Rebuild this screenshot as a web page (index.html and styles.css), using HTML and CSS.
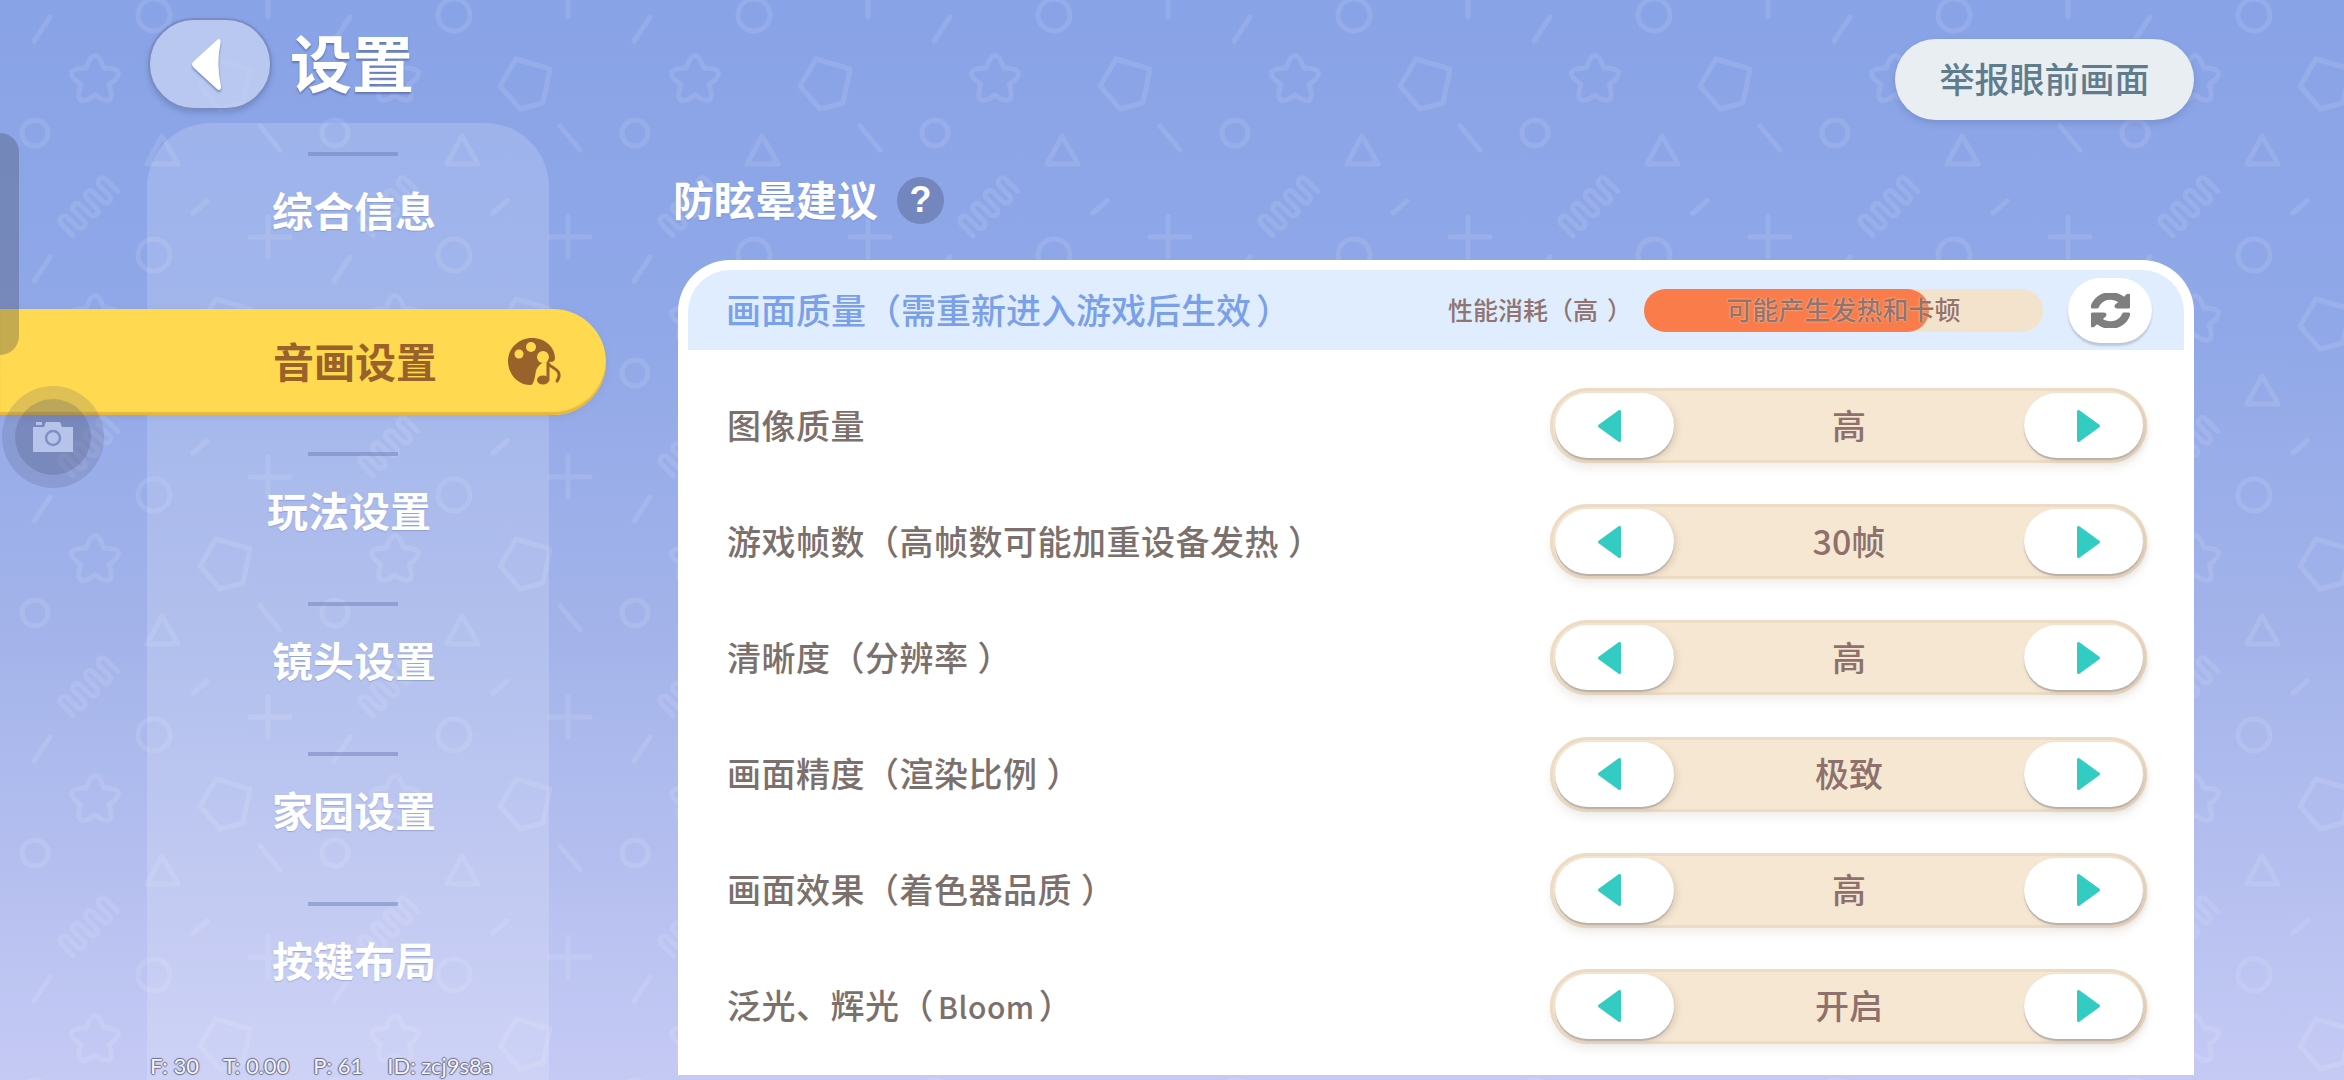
FILE: index.html
```html
<!DOCTYPE html>
<html lang="zh-CN">
<head>
<meta charset="utf-8">
<title>设置</title>
<link rel="stylesheet" href="styles.css">
</head>
<body>
<svg class="defs" aria-hidden="true">
  <symbol id="tri" viewBox="0 0 25 34"><path d="M22.5 2.5V31.5L2.5 17Z"/></symbol>
</svg>
<div class="page">
  <aside class="side">
    <div class="top">
      <button class="back" aria-label="返回">
        <svg class="back-arrow" viewBox="0 0 32 55"><path d="M26 3C28 1 30 2 29.5 6Q25 28 30 49C30.5 53 28 54 26 52L3 31Q-1 27 3 24Z"/></svg>
      </button>
      <h1 class="title">设置</h1>
    </div>
    <nav class="panel">
      <i class="sep"></i><a class="item">综合信息</a>
      <a class="active"><span>音画设置</span>
        <svg class="palette" viewBox="0 0 54 48">
          <path class="brown" d="M24 0C38 0 47 10 47 20C47 23 45 24 42 24C35 23 30 27 28 33C27 37 27 41 25 45C24 47 23 47 22 47C10 47 0 36 0 23C0 10 11 0 24 0Z"/>
          <circle class="hole" cx="11" cy="16" r="4.500"/><circle class="hole" cx="23" cy="9" r="5"/><circle class="hole" cx="35" cy="19" r="6"/>
          <ellipse class="brown" cx="35" cy="42" rx="6" ry="4.500"/>
          <path class="note" d="M40 42V25C42 30 50 30 51 36C51.500 39 50.500 41 49 43"/>
        </svg>
      </a>
      <i class="sep"></i><a class="item item-shift">玩法设置</a>
      <i class="sep"></i><a class="item">镜头设置</a>
      <i class="sep"></i><a class="item">家园设置</a>
      <i class="sep"></i><a class="item">按键布局</a>
      <div class="debug"><span>F: 30</span><span>T: 0.00</span><span>P: 61</span><span>ID: zcj9s8a</span></div>
    </nav>
  </aside>

  <main class="main">
    <button class="report">举报眼前画面</button>
    <div class="heading"><h2 class="heading-text">防眩晕建议</h2><span class="help">?</span></div>
    <section class="card">
      <header class="card-head">
        <h3 class="card-title">画面质量（需重新进入游戏后生效<span class="rp rp-title">）</span></h3>
        <span class="cost">性能消耗（高<span class="rp">）</span></span>
        <div class="bar"><div class="bar-fill" style="width:71.500%"></div><span class="bar-text">可能产生发热和卡顿</span></div>
        <button class="refresh" aria-label="重置">
          <svg class="refresh-icon" viewBox="0 0 1536 1536" preserveAspectRatio="none"><path d="M1511 928q0 5-1 7-64 268-268 434.5t-478 166.5q-146 0-282.5-55t-243.5-157l-129 129q-19 19-45 19t-45-19-19-45v-448q0-26 19-45t45-19h448q26 0 45 19t19 45-19 45l-137 137q71 66 161 102t187 36q134 0 250-65t186-179q11-17 53-117 8-23 30-23h192q13 0 22.5 9.5t9.5 22.5zm25-800v448q0 26-19 45t-45 19h-448q-26 0-45-19t-19-45 19-45l138-138q-148-137-349-137-134 0-250 65t-186 179q-11 17-53 117-8 23-30 23h-199q-13 0-22.5-9.5t-9.500-22.5v-7q65-268 270-434.5t480-166.5q146 0 284 55.5t245 156.5l130-129q19-19 45-19t45 19 19 45z"/></svg>
        </button>
      </header>
      <div class="rows">
        <div class="row"><span class="label">图像质量</span><div class="stepper"><button class="step"><svg class="tri tri-left"><use href="#tri"/></svg></button><span class="value">高</span><button class="step"><svg class="tri tri-right"><use href="#tri"/></svg></button></div></div>
        <div class="row"><span class="label">游戏帧数（高帧数可能加重设备发热<span class="rp">）</span></span><div class="stepper"><button class="step"><svg class="tri tri-left"><use href="#tri"/></svg></button><span class="value">30帧</span><button class="step"><svg class="tri tri-right"><use href="#tri"/></svg></button></div></div>
        <div class="row"><span class="label">清晰度（分辨率<span class="rp">）</span></span><div class="stepper"><button class="step"><svg class="tri tri-left"><use href="#tri"/></svg></button><span class="value">高</span><button class="step"><svg class="tri tri-right"><use href="#tri"/></svg></button></div></div>
        <div class="row"><span class="label">画面精度（渲染比例<span class="rp">）</span></span><div class="stepper"><button class="step"><svg class="tri tri-left"><use href="#tri"/></svg></button><span class="value">极致</span><button class="step"><svg class="tri tri-right"><use href="#tri"/></svg></button></div></div>
        <div class="row"><span class="label">画面效果（着色器品质<span class="rp">）</span></span><div class="stepper"><button class="step"><svg class="tri tri-left"><use href="#tri"/></svg></button><span class="value">高</span><button class="step"><svg class="tri tri-right"><use href="#tri"/></svg></button></div></div>
        <div class="row"><span class="label">泛光、辉光（<span class="latin">Bloom</span>）</span><div class="stepper"><button class="step"><svg class="tri tri-left"><use href="#tri"/></svg></button><span class="value">开启</span><button class="step"><svg class="tri tri-right"><use href="#tri"/></svg></button></div></div>
      </div>
    </section>
  </main>

  <div class="handle"></div>
  <div class="shot">
    <div class="shot-inner">
      <svg class="camera" viewBox="0 0 40 30">
        <path class="camera-body" d="M0 5H11L13 0H27L29 5H40V30H0Z"/>
        <rect class="camera-body" x="3" y="0" width="6" height="3"/>
        <circle class="camera-lens" cx="20" cy="16" r="7"/>
      </svg>
    </div>
  </div>
</div>
</body>
</html>
```
FILE: styles.css
```css
* { box-sizing: border-box; }
html, body { margin: 0; padding: 0; }
body { width: 2344px; height: 1080px; overflow: hidden; font-family: "Noto Sans CJK SC", "Noto Sans", sans-serif; text-spacing-trim: space-all; }
.defs { display: none; }
button { border: 0; padding: 0; font: inherit; cursor: pointer; }
h1, h2, h3 { margin: 0; font-weight: 500; }

.page {
  position: relative;
  display: flex;
  width: 2344px;
  height: 1080px;
  overflow: hidden;
  background-color: #86a1e5;
  background-image:
    url("data:image/svg+xml,%3Csvg xmlns='http://www.w3.org/2000/svg' width='300' height='240' fill='none' stroke='%23fff' stroke-opacity='.1' stroke-width='5' stroke-linecap='round' stroke-linejoin='round'%3E%3Cpath d='M86.200 67.900Q95 43 103.800 67.900Q130.200 68.600 109.300 84.600Q116.700 109.900 95 95Q73.300 109.900 80.700 84.600Q59.800 68.600 86.200 67.900Z'/%3E%3Cpath d='M216 59L250 69L243 103L220 109L200 86Z'/%3E%3Ccircle cx='35' cy='133' r='13'/%3E%3Ccircle cx='154' cy='15' r='16'/%3E%3Ccircle cx='154' cy='255' r='16'/%3E%3Cpath d='M162 136L178 164H147Z'/%3E%3Cpath d='M260 126L280 150M50 17L34 41M193 213L207 201M250 237H290M268 217V257M250 -3H290M268 -23V17'/%3E%3Cpath transform='translate(87 205) rotate(-45)' d='M-31.500 12v-17a4.500 4.500 0 0 1 9 0v14a4.500 4.500 0 0 0 9 0v-14a4.500 4.500 0 0 1 9 0v14a4.500 4.500 0 0 0 9 0v-14a4.500 4.500 0 0 1 9 0v14a4.500 4.500 0 0 0 9 0v-14a4.500 4.500 0 0 1 9 0v17'/%3E%3C/svg%3E"),
    linear-gradient(#88a3e6 0%, #90a8e8 30%, #a4b4ea 60%, #c5caf4 100%);
  background-size: 300px 240px, 100% 100%;
}

/* Sidebar */
.side { display: flex; flex-direction: column; width: 678px; flex: none; }
.top { display: flex; align-items: center; gap: 18px; margin: 18px 0 0 148px; height: 92px; }
.back {
  display: flex; align-items: center; justify-content: center;
  width: 124px; height: 92px; border-radius: 46px;
  background: rgba(200, 212, 243, .75);
  border: 2px solid #7a8cc0;
  box-shadow: 0 3px 5px rgba(70, 85, 140, .3);
}
.back-arrow { width: 32px; height: 55px; margin-right: 6px; fill: #fff; filter: drop-shadow(0 2px 1px rgba(70, 85, 140, .55)); }
.title { font-size: 62px; font-weight: 700; line-height: 86px; padding-bottom: 6px; color: #fff; text-shadow: 0 2px 2px rgba(70, 85, 140, .55); }

.panel {
  display: flex; flex-direction: column; flex: 1;
  width: 402px; margin: 13px 0 0 147px; padding-top: 29px;
  border-radius: 64px 64px 0 0;
  background: rgba(255, 255, 255, .16);
}
.sep { display: block; flex: none; width: 90px; height: 4px; margin-left: 161px; background: rgba(110, 125, 185, .5); }
.item {
  display: block; flex: none; height: 146px; padding-left: 12px;
  font-size: 41px; font-weight: 700; line-height: 107px; text-align: center; color: #fff;
  text-shadow: 0 1px 1px rgba(90, 105, 170, .35);
}
.item-shift { padding-left: 2px; }
.active {
  display: flex; align-items: center; flex: none;
  width: 606px; height: 106px; margin: 7px 0 37px -147px; padding-left: 273px;
  border-radius: 0 53px 53px 0;
  background: #ffd94f;
  box-shadow: inset 0 -3px 1px #e6b93e, 0 2px 6px rgba(120, 110, 90, .15);
  font-size: 41px; font-weight: 700; color: #9a622b;
}
.active span { padding-bottom: 5px; }
.palette { width: 54px; height: 48px; margin-left: 71px; }
.brown { fill: #9a622b; }
.hole { fill: #ffd94f; }
.note { fill: none; stroke: #9a622b; stroke-width: 3; stroke-linecap: round; stroke-linejoin: round; }

.debug {
  display: flex; gap: 24px; height: 28px; margin-left: 3px;
  font-family: "Lato", "Noto Sans", sans-serif; font-size: 22px; line-height: 28px;
  color: #f4f4f8; white-space: nowrap;
  text-shadow: 1px 0 1px #6a6e8c, -1px 0 1px #6a6e8c, 0 1px 1px #6a6e8c, 0 -1px 1px #6a6e8c;
}

/* Main */
.main { display: flex; flex-direction: column; width: 1516px; flex: none; }
.report {
  align-self: flex-end; flex: none;
  width: 299px; height: 81px; margin: 39px 0 0 0; padding-bottom: 4px; border-radius: 41px;
  background: #e9eef3; color: #5f7c8c;
  font-size: 35px; font-weight: 500;
  box-shadow: 0 3px 6px rgba(70, 85, 140, .25);
}
.heading { display: flex; align-items: center; gap: 22px; height: 60px; margin: 50px 0 0 -5px; flex: none; }
.heading-text { font-size: 41px; font-weight: 700; color: #fff; line-height: 54px; padding-bottom: 4px; text-shadow: 0 1px 1px rgba(90, 105, 170, .4); }
.help {
  display: flex; align-items: center; justify-content: center;
  width: 47px; height: 47px; margin-left: -3px; border-radius: 50%;
  background: #7386bd; color: #fff;
  font-family: "Liberation Sans Narrow", "Liberation Sans", sans-serif; font-size: 36px; font-weight: 700;
}
.card {
  flex: none; height: 815px; margin-top: 30px; padding: 10px 10px 0;
  border-radius: 52px 52px 0 0; background: #fff;
}
.card-head {
  display: flex; align-items: center; height: 80px; padding: 0 32px 0 38px;
  border-radius: 42px 42px 0 0; background: #e0edff;
}
.card-title { font-size: 35px; font-weight: 500; color: #7ba0ea; padding-bottom: 4px; white-space: nowrap; }
.cost { margin-left: auto; font-size: 25px; font-weight: 500; color: #8f7471; padding-bottom: 3px; white-space: nowrap; }
.bar {
  display: grid; align-items: center; flex: none; width: 399px; height: 43px; margin-left: 12px;
  border-radius: 22px; background: #f3e2cc;
}
.bar-fill { grid-area: 1 / 1; height: 43px; border-radius: 22px; background: #f97c4a; }
.bar-text {
  grid-area: 1 / 1; text-align: center; font-size: 26px; font-weight: 500; line-height: 39px; padding-bottom: 4px; color: #94736b;
  text-shadow: 0 0 2px rgba(255, 236, 216, .85);
}
.refresh {
  display: flex; align-items: center; justify-content: center; flex: none;
  width: 84px; height: 65px; margin-left: 25px; border-radius: 33px;
  background: #fff; box-shadow: 0 3px 2px rgba(130, 130, 140, .35);
}
.refresh-icon { width: 39px; height: 35px; fill: #7f7f7f; stroke: #7f7f7f; stroke-width: 70; }

.rows { display: flex; flex-direction: column; gap: 41.200px; padding: 38px 37px 0 39px; }
.row { display: flex; align-items: center; justify-content: space-between; height: 75px; }
.label { font-size: 34px; font-weight: 500; letter-spacing: .5px; color: #7b706c; padding-bottom: 3px; }
.rp { margin-left: 9px; }
.rp-title { margin-left: 5px; }
.latin { font-size: 30px; margin: 0 4px; }
.stepper {
  display: flex; align-items: center; justify-content: space-between;
  width: 597px; height: 75px; padding: 0 4px 0 5px; border-radius: 38px;
  background: #f6e7d3;
  box-shadow: inset 0 0 0 3px #ecdcc6, inset 0 -2px 1px #e4d3bc, 0 6px 8px rgba(130, 110, 90, .1);
}
.value { font-size: 34px; font-weight: 500; color: #8e716c; padding-bottom: 3px; }
.step {
  display: flex; align-items: center; justify-content: center;
  width: 119px; height: 65px; border-radius: 33px;
  background: #fff;
  box-shadow: 0 2px 1px #b8b0aa, 3px 3px 6px rgba(120, 100, 80, .18);
}
.tri { width: 25px; height: 34px; fill: #33ccc3; stroke: #33ccc3; stroke-width: 3; stroke-linejoin: round; }
.tri-left { margin-right: 10px; }
.tri-right { margin-left: 10px; transform: scaleX(-1); }

/* Overlays */
.handle {
  position: absolute; left: 0; top: 133px; width: 19px; height: 222px;
  border-radius: 0 20px 20px 0; background: rgba(60, 65, 80, .3);
}
.shot {
  position: absolute; left: 2px; top: 386px; display: flex; align-items: center; justify-content: center;
  width: 102px; height: 102px; border-radius: 50%; background: rgba(70, 75, 110, .18);
}
.shot-inner {
  display: flex; align-items: center; justify-content: center;
  width: 76px; height: 76px; border-radius: 50%; background: rgba(70, 75, 110, .22);
}
.camera { width: 40px; height: 30px; }
.camera-body { fill: #b6c4ea; }
.camera-lens { fill: none; stroke: #7f90c4; stroke-width: 2.500; }
```
